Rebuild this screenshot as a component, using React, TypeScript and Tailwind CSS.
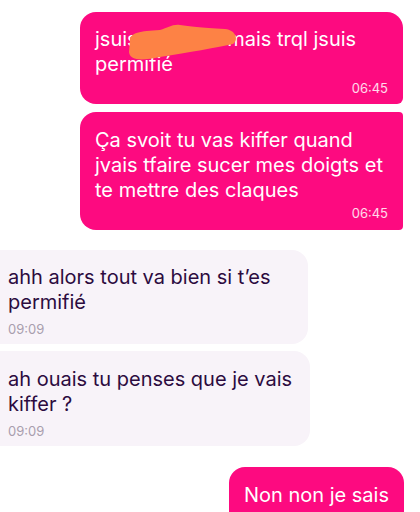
import React from 'react';

const pink = 'bg-[#fd0a80]';

export default function App() {
  return (
    <div className="w-[420px] h-[512px] overflow-hidden bg-white font-['Inter',sans-serif]">
      <div className="flex flex-col pt-[12px]">
        {/* outgoing 1 */}
        <div className="flex justify-end pr-[17px]">
          <div className={`relative w-[323px] ${pink} rounded-[16px] rounded-br-[6px] pl-[15px] pr-[15px] pt-[15px] pb-[8px] text-white`}>
            <p className="text-[20px] leading-[25px]">
              jsuis <span className="inline-block w-[84px]"></span>mais trql jsuis permifié
            </p>
            <div className="text-right text-[13px] leading-[16px] mt-[3px] text-white/85">06:45</div>
            <svg className="absolute left-[40px] top-[10px]" width="120" height="42" viewBox="120 22 120 42">
              <path
                d="M130 40 C130 33 140 31 160 30 C168 28 172 24 180 25 C190 26 200 28 225 29 C236 30 239 40 233 44 C215 48 190 52 160 57 C145 60 130 62 129 52 Z"
                fill="#fd8245"
              />
            </svg>
          </div>
        </div>

        {/* outgoing 2 */}
        <div className="flex justify-end pr-[17px] mt-[8px]">
          <div className={`w-[323px] ${pink} rounded-[16px] rounded-tr-[4px] rounded-br-[4px] pl-[15px] pr-[15px] pt-[16px] pb-[9px] text-white`}>
            <p className="text-[20px] leading-[25px]">
              Ça svoit tu vas kiffer quand jvais tfaire sucer mes doigts et te mettre des claques
            </p>
            <div className="text-right text-[13px] leading-[16px] mt-[2px] text-white/85">06:45</div>
          </div>
        </div>

        {/* incoming 1 */}
        <div className="flex justify-start mt-[20px]">
          <div className="w-[308px] bg-[#f8f3f9] rounded-r-[16px] pl-[8px] pr-[8px] pt-[15px] pb-[7px] text-[#2c0b40]">
            <p className="text-[20px] leading-[25px]">ahh alors tout va bien si t’es permifié</p>
            <div className="text-[13px] leading-[16px] mt-[6px] text-[#a89eae]">09:09</div>
          </div>
        </div>

        {/* incoming 2 */}
        <div className="flex justify-start mt-[7px]">
          <div className="w-[310px] bg-[#f8f3f9] rounded-r-[16px] pl-[8px] pr-[8px] pt-[16px] pb-[7px] text-[#2c0b40]">
            <p className="text-[20px] leading-[25px]">ah ouais tu penses que je vais kiffer ?</p>
            <div className="text-[13px] leading-[16px] mt-[6px] text-[#a89eae]">09:09</div>
          </div>
        </div>

        {/* outgoing 3 */}
        <div className="flex justify-end pr-[16px] mt-[21px]">
          <div className={`${pink} rounded-[16px] px-[15px] pt-[16px] pb-[20px] text-white`}>
            <p className="text-[20px] leading-[25px]">Non non je sais</p>
          </div>
        </div>
      </div>
    </div>
  );
}
